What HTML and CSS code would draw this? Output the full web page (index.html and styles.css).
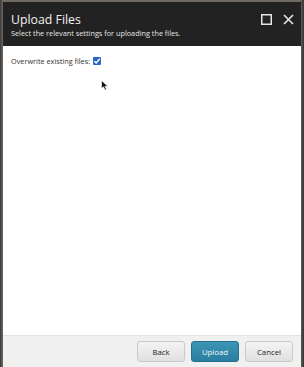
FILE: index.html
```html
<!DOCTYPE html>
<html>
<head>
<meta charset="utf-8">
<link rel="stylesheet" href="styles.css">
</head>
<body>
<div class="dialog">
  <div class="header">
    <div class="titles">
      <div class="title">Upload Files</div>
      <div class="subtitle">Select the relevant settings for uploading the files.</div>
    </div>
    <div class="controls">
      <svg class="ctl" width="11" height="11" viewBox="0 0 11 11"><rect x="0.75" y="0.75" width="9.5" height="9.5" fill="none" stroke="#e6e6e6" stroke-width="1.5"/></svg>
      <svg class="ctl" width="11" height="11" viewBox="0 0 11 11"><path d="M1 1 L10 10 M10 1 L1 10" stroke="#e6e6e6" stroke-width="1.6" fill="none"/></svg>
    </div>
  </div>
  <div class="content">
    <label class="option">Overwrite existing files:
      <span class="check"><svg width="8" height="8" viewBox="0 0 8 8"><path d="M1.3 4.2 L3.2 6 L6.8 1.8" stroke="#fff" stroke-width="1.4" fill="none"/></svg></span>
    </label>
    <svg class="cursor" width="8" height="11" viewBox="0 0 8 11"><path d="M0.5 0.5 L0.5 8.5 L2.5 6.8 L4 10 L5.4 9.4 L4 6.3 L6.8 6.3 Z" fill="#111" stroke="#fff" stroke-width="0.6"/></svg>
  </div>
  <div class="footer">
    <button class="btn">Back</button>
    <button class="btn primary">Upload</button>
    <button class="btn">Cancel</button>
  </div>
</div>
</body>
</html>
```

FILE: styles.css
```css
html, body { margin: 0; padding: 0; }
body {
  width: 304px;
  height: 367px;
  overflow: hidden;
  background: linear-gradient(90deg, #3e3934 0px, #6f6a64 3px, #6f6a64 300px, #35312d 304px);
  padding: 2px 3px 0 3px;
  box-sizing: border-box;
  font-family: "Open Sans", "Liberation Sans", sans-serif;
}
.dialog {
  height: 365px;
  display: flex;
  flex-direction: column;
  background: #fff;
}
.header {
  background: #222222;
  height: 44px;
  display: flex;
  justify-content: space-between;
  padding: 0 7px 0 8px;
  box-sizing: border-box;
}
.titles { padding-top: 10px; }
.title {
  color: #f2f2f2;
  font-size: 12.3px;
  line-height: 16px;
}
.subtitle {
  color: #e6e6e6;
  font-size: 7.3px;
  line-height: 12px;
  margin-top: -1px;
}
.controls {
  display: flex;
  gap: 11px;
  padding-top: 12px;
}
.content {
  flex: 1;
  position: relative;
  padding: 10px 8px;
}
.option {
  display: flex;
  align-items: center;
  gap: 3px;
  font-size: 7.3px;
  color: #333;
}
.check {
  width: 8px;
  height: 8px;
  background: #2a66c4;
  border-radius: 1px;
  display: inline-flex;
}
.cursor {
  position: absolute;
  left: 98px;
  top: 34px;
}
.footer {
  height: 31px;
  background: #f0f0f0;
  border-top: 1px solid #e2e2e2;
  display: flex;
  justify-content: flex-end;
  align-items: center;
  gap: 6px;
  padding: 0 8px 0 0;
}
.btn {
  width: 48px;
  height: 21px;
  border: 1px solid #c9c9c9;
  border-radius: 3px;
  background: linear-gradient(#f4f4f4, #e0e0e0);
  font-family: "Open Sans", "Liberation Sans", sans-serif;
  font-size: 7.8px;
  color: #222;
  padding: 0;
}
.btn.primary {
  background: linear-gradient(#3b95b5, #2b7ea0);
  border-color: #256f8e;
  color: #f0f6f9;
}
```
